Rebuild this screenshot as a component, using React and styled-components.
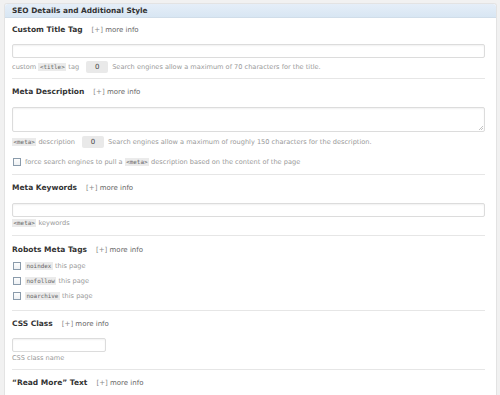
import React from "react";
import styled, { createGlobalStyle } from "styled-components";

const Global = createGlobalStyle`
  html, body { margin: 0; padding: 0; background: #f1f1f1; }
  body { font-family: "DejaVu Sans", Verdana, sans-serif; }
`;

const Page = styled.div`
  padding: 3px 3px 0 4px;
  height: 392px;
  overflow: hidden;
`;

const Panel = styled.div`
  background: #fff;
  border: 1px solid #e3e3e3;
  border-bottom: none;
  border-radius: 3px 3px 0 0;
  height: 100%;
  box-sizing: border-box;
`;

const Header = styled.div`
  height: 13px;
  line-height: 13px;
  padding: 0 7px;
  font-size: 7.4px;
  font-weight: bold;
  color: #333;
  background: linear-gradient(to bottom, #e5eef8, #d8e6f3);
  border-bottom: 1px solid #d0dde9;
  border-radius: 3px 3px 0 0;
`;

const Body = styled.div`
  padding: 0 11px 0 7px;
`;

const Section = styled.div`
  padding: ${(p) => p.$pt ?? 7}px 0 ${(p) => p.$pb ?? 7}px;
  border-bottom: ${(p) => (p.$last ? "none" : "1px solid #e6e6e6")};
`;

const TitleRow = styled.div`
  display: flex;
  align-items: baseline;
  height: 12px;
  line-height: 12px;
  margin-bottom: ${(p) => p.$mb ?? 8}px;
`;

const Title = styled.span`
  font-size: 7.5px;
  font-weight: bold;
  color: #333;
`;

const More = styled.span`
  margin-left: 9px;
  font-size: 7px;
  color: #888;
  span { color: #666; }
`;

const TextInput = styled.div`
  box-sizing: border-box;
  height: ${(p) => p.$h ?? 14}px;
  width: ${(p) => p.$w ?? "100%"};
  border: 1px solid #dcdcdc;
  border-radius: 2px;
  background: #fff;
  box-shadow: inset 0 1px 2px rgba(0, 0, 0, 0.06);
  position: relative;
`;

const Grip = styled.svg`
  position: absolute;
  right: 1px;
  bottom: 1px;
`;

const Hint = styled.div`
  display: flex;
  align-items: center;
  margin-top: ${(p) => p.$mt ?? 2}px;
  height: ${(p) => p.$h ?? 10}px;
  font-size: 6.6px;
  color: #999;
  white-space: pre;
`;

const Code = styled.code`
  font-family: "DejaVu Sans Mono", monospace;
  font-size: 5.9px;
  line-height: 8px;
  background: #ebebeb;
  color: #666;
  padding: 0 1.5px;
`;

const Counter = styled.span`
  display: inline-flex;
  align-items: center;
  justify-content: center;
  width: 22px;
  height: 12px;
  margin: 0 4px 0 7px;
  background: #e9e9e9;
  border-radius: 2px;
  color: #444;
  font-size: 7px;
`;

const CheckRow = styled.label`
  display: flex;
  align-items: center;
  height: 12px;
  margin-top: ${(p) => p.$mt ?? 3}px;
  font-size: 6.6px;
  color: #999;
  white-space: pre;
`;

const Box = styled.span`
  box-sizing: border-box;
  width: 8px;
  height: 8px;
  border: 1px solid #8a9bab;
  background: linear-gradient(#fdfdfd, #eef1f4);
  margin: 0 4px 0 1px;
`;

function Head({ children, mb }) {
  return (
    <TitleRow $mb={mb}>
      <Title>{children}</Title>
      <More>
        [+] <span>more info</span>
      </More>
    </TitleRow>
  );
}

export default function App() {
  return (
    <>
      <Global />
      <Page>
        <Panel>
          <Header>SEO Details and Additional Style</Header>
          <Body>
            <Section $pt={6} $pb={5}>
              <Head>Custom Title Tag</Head>
              <TextInput />
              <Hint $mt={3} $h={12}>
                {"custom "}<Code>&lt;title&gt;</Code>{" tag"}
                <Counter>0</Counter>
                Search engines allow a maximum of 70 characters for the title.
              </Hint>
            </Section>
            <Section $pt={7} $pb={6}>
              <Head mb={9}>Meta Description</Head>
              <TextInput $h={25}>
                <Grip width="5" height="5" viewBox="0 0 5 5">
                  <path d="M5 1L1 5M5 3L3 5" stroke="#aaa" strokeWidth="0.7" />
                </Grip>
              </TextInput>
              <Hint $mt={4} $h={12}>
                <Code>&lt;meta&gt;</Code>{" description"}
                <Counter>0</Counter>
                Search engines allow a maximum of roughly 150 characters for the description.
              </Hint>
              <CheckRow $mt={8}>
                <Box />
                {"force search engines to pull a "}<Code>&lt;meta&gt;</Code>{" description based on the content of the page"}
              </CheckRow>
            </Section>
            <Section $pt={7} $pb={7}>
              <Head mb={9}>Meta Keywords</Head>
              <TextInput />
              <Hint $mt={1}>
                <Code>&lt;meta&gt;</Code>{" keywords"}
              </Hint>
            </Section>
            <Section $pt={8} $pb={8}>
              <Head mb={4}>Robots Meta Tags</Head>
              <CheckRow $mt={0}>
                <Box /><Code>noindex</Code>{" this page"}
              </CheckRow>
              <CheckRow>
                <Box /><Code>nofollow</Code>{" this page"}
              </CheckRow>
              <CheckRow>
                <Box /><Code>noarchive</Code>{" this page"}
              </CheckRow>
            </Section>
            <Section $pt={7} $pb={6}>
              <Head mb={8}>CSS Class</Head>
              <TextInput $w="94px" />
              <Hint $mt={1}>CSS class name</Hint>
            </Section>
            <Section $pt={7} $last>
              <Head>“Read More” Text</Head>
            </Section>
          </Body>
        </Panel>
      </Page>
    </>
  );
}
